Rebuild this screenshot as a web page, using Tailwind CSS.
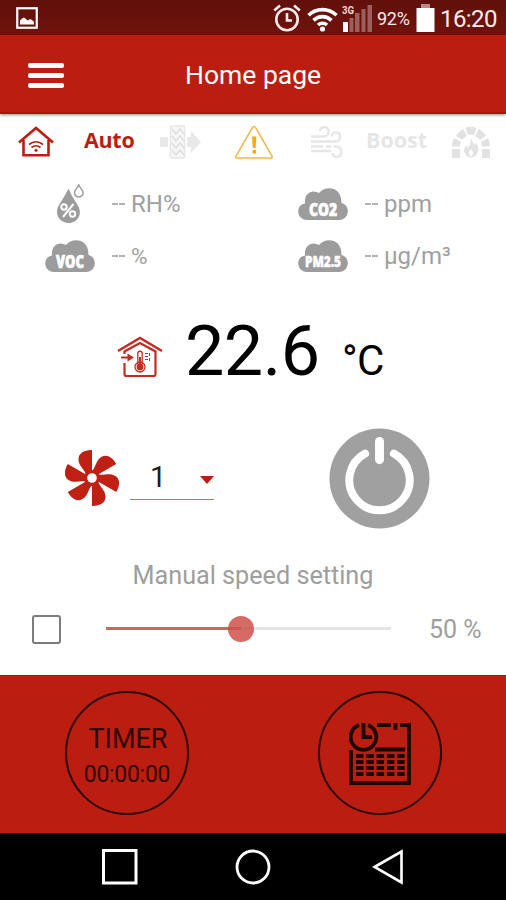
<!DOCTYPE html>
<html lang="en">

<head>
 <meta charset="UTF-8">
 <meta name="viewport" content="width=device-width, initial-scale=1.0">
 <title>Home page</title>
 <script src="https://cdn.jsdelivr.net/npm/@tailwindcss/browser@4"></script>
</head>

<body class="w-[506px] h-[900px] overflow-hidden flex flex-col bg-white font-['Roboto',sans-serif] leading-none whitespace-nowrap">
<!-- Status bar -->
<div class="h-[35px] shrink-0 bg-linear-to-b from-[#61100b] to-[#70130c] flex items-center text-[#fbeceb]">
 <svg class="w-[22px] h-[22px] ml-4" viewBox="0 0 22 22">
  <rect x="1.25" y="1.25" width="19.5" height="19.5" fill="none" stroke="#fff" stroke-width="2.2"/>
  <path d="M4 17.500V13.500L6 11.500 8 10.500 10.500 12.500 12 13.500 14 12 16 13 18 15V17.500Z" fill="#fff"/>
 </svg>
 <!-- Alarm -->
 <svg class="w-7 h-7 ml-[235px]" viewBox="0 0 28 28" fill="none" stroke="#fbeceb" stroke-width="2.600">
  <circle cx="14" cy="15.500" r="10.700"/>
  <path d="M14 9v7.500h5M1.200 6.500L7 1.500M26.800 6.500L21 1.500"/>
 </svg>
 <!-- Wifi -->
 <svg class="w-[31px] h-7 ml-[6px] mt-[2px]" viewBox="0 0 31 28" fill="none" stroke="#fff" stroke-width="3.600">
  <path d="M1.500 10.200C9.500 2.800 21.500 2.800 29.500 10.200M6.500 15.400C12 10.300 19 10.300 24.500 15.400M11 20C13.500 17.700 17.500 17.700 20 20"/>
  <circle cx="15.500" cy="24" r="2.600" fill="#fff" stroke="none"/>
 </svg>
 <!-- Signal -->
 <svg class="w-[31px] h-7 ml-1" viewBox="0 0 31 28">
  <path d="M1 18h5v10H1z" fill="#fff"/>
  <path d="M7.500 14h4v14h-4zM13 9h4.500v19H13zM19.500 5h4v23h-4zM25.500 1h4.500v27h-4.500z" fill="#9d5f5b"/>
  <text x="0" y="10" font-size="10.500" font-weight="700" fill="#f3d9d7" textLength="12" lengthAdjust="spacingAndGlyphs">3G</text>
 </svg>
 <span class="ml-1 mt-[3px] w-[34px] text-[18px] tracking-[-0.3px]">92%</span>
 <svg class="w-[19px] h-7 ml-[5px]" viewBox="0 0 19 28">
  <path d="M5 0h9v4H5z" fill="#b98a87"/>
  <path d="M0.500 4h18v24h-18z" fill="#fff"/>
 </svg>
 <span class="ml-[5px] mt-[3px] text-[24px] tracking-[-0.6px]">16:20</span>
</div>

<!-- Title bar -->
<header class="relative z-10 h-[79px] shrink-0 bg-[#bb1e11] flex items-center border-b-2 border-[#ae1409] shadow-[0_1px_3px_rgba(0,0,0,0.45)]">
 <button class="ml-[28px] mt-[3px] w-9 flex flex-col gap-[5px]">
  <span class="h-[5px] rounded-[2px] bg-white"></span>
  <span class="h-[5px] rounded-[2px] bg-white"></span>
  <span class="h-[5px] rounded-[2px] bg-white"></span>
 </button>
 <h1 class="ml-[121px] pt-[4px] text-[26.500px] text-white">Home page</h1>
</header>

<main class="h-[561px] shrink-0 flex flex-col">
 <!-- Mode icons -->
 <div class="h-14 flex items-center font-['Open_Sans',sans-serif] font-bold text-[21.500px]">
  <svg class="w-9 h-8 ml-[18px]" viewBox="0 0 36 32" fill="none" stroke="#bb1e11">
   <path d="M1 16.500L18 2l17 14.500M5.500 14v15.300h25V14" stroke-width="2.600"/>
   <path d="M11 18.500q7-5.500 14 0M13.500 21.500q4.500-3.500 9 0" stroke-width="1.700"/>
   <circle cx="18" cy="24.300" r="1.500" fill="#bb1e11" stroke="none"/>
  </svg>
  <span class="ml-[30px] w-[50px] pb-[5px] tracking-[-0.3px] text-[#bb1e11]">Auto</span>
  <svg class="w-[41px] h-[34px] ml-[26px]" viewBox="0 0 41 34">
   <path d="M0 12h8v10H0zM27 12h4V6l10 11-10 11v-6h-4z" fill="#e8e8e8"/>
   <rect x="10.500" y="1" width="14" height="32" rx="1" fill="#f7f7f7" stroke="#e6e6e6" stroke-width="1.500"/>
   <path d="M12 4l4 5 4-5 4 5M12 11l4 5 4-5 4 5M12 18l4 5 4-5 4 5M12 25l4 5 4-5 4 5" fill="none" stroke="#dedede" stroke-width="1.500"/>
  </svg>
  <svg class="w-10 h-9 ml-[33px]" viewBox="0 0 40 36">
   <path d="M20 2.500q1 0 1.600 1.200L38 32q.8 2-1.300 2H3.300Q1.200 34 2 32L18.400 3.700Q19 2.500 20 2.500Z" fill="none" stroke="#f4b643" stroke-width="1.500"/>
   <path d="M18 12.500h4.400l-.8 11.500h-2.800zM18.500 26h3.500v3.500h-3.500z" fill="#f5aa1c"/>
  </svg>
  <svg class="w-[33px] h-[34px] ml-9" viewBox="0 0 33 34" fill="none" stroke="#e6e6e6" stroke-width="2.400">
   <path d="M1 11.500h13c6 0 6-9.500.5-9.500-3 0-4.500 2-4.500 4M1 16.500h24c7 0 7-9 1-9-3 0-4.500 2-4.500 4M1 21.500h12M16 21.500h5M1 26h20M24 21.500h2c7 0 7 10.500 1 10.500-3 0-4.500-1.500-4.500-4"/>
  </svg>
  <span class="ml-[23px] w-[62px] pb-[5px] text-[#e6e6e6]">Boost</span>
  <svg class="w-[38px] h-8 ml-[24px]" viewBox="0 0 38 32" fill="#e2e2e2">
   <path d="M0 23h8v9H0zM30 23h8v9h-8zM0 20.500Q0 16 2 12l7 4q-1 2-1 4.500zM38 20.500Q38 16 36 12l-7 4q1 2 1 4.500zM4 9.500Q7 5.500 11 3l4 7q-3 1.500-5 4zM34 9.500Q31 5.500 27 3l-4 7q3 1.500 5 4zM13.500 2Q19-.5 24.500 2L22 9q-3-1-6 0z"/>
   <path d="M19 12q1 4 4 7 1-1 1-3 3 5 2 9-1 5-7 7-6-2-7-7 0-4 3-6 0 2 1 3 3-4 3-10z"/>
   <path d="M19 23q4 4 0 8-4-4 0-8z" fill="#fff"/>
  </svg>
 </div>

 <!-- Air quality -->
 <div class="mt-2 grid grid-cols-2 grid-rows-[52px_52px] text-[24px] text-[#a0a0a0]">
  <div class="flex items-center">
   <svg class="w-7 h-10 ml-14" viewBox="0 0 28 40" fill="#9c9c9c">
    <path d="M12.500 4.500Q15 11 21 20c7 10 0 19-8.500 19S-3 30 3.500 20Q9.500 11 12.500 4.500Z"/>
    <path d="M22.800.8Q24 3.500 26 6c3 4-.5 7-3.200 7s-6-3-3.200-7q2-2.500 3.200-5.200Z" fill="none" stroke="#9c9c9c" stroke-width="1.400"/>
    <g fill="none" stroke="#fff" stroke-width="2"><circle cx="8" cy="23" r="2.700"/><circle cx="16.500" cy="30" r="2.700"/><path d="M17.500 20L7 33"/></g>
   </svg>
   <span class="ml-7 flex items-center"><span class="mr-[5px] w-[14px] flex gap-px"><i class="w-[6px] h-[2px] bg-[#b2b2b2]"></i><i class="w-[6px] h-[2px] bg-[#b2b2b2]"></i></span>RH%</span>
  </div>
  <div class="flex items-center">
   <svg class="w-[50px] h-8 ml-[45px]" viewBox="0 0 50 32">
    <path d="M9 32C-1.500 32-3 17 7 15.500 6 5 14 1 21 5 27-3 44-2 43.500 15 53 17 51.500 32 41 32Z" fill="#9c9c9c"/>
    <text x="11" y="27.500" font-family="Open Sans" font-size="17" font-weight="800" fill="#fff" stroke="#fff" stroke-width=".7" textLength="28" lengthAdjust="spacingAndGlyphs">CO2</text>
   </svg>
   <span class="ml-[17px] flex items-center"><span class="mr-[5px] w-[14px] flex gap-px"><i class="w-[6px] h-[2px] bg-[#b2b2b2]"></i><i class="w-[6px] h-[2px] bg-[#b2b2b2]"></i></span>ppm</span>
  </div>
  <div class="flex items-center">
   <svg class="w-[50px] h-8 ml-[45px]" viewBox="0 0 50 32">
    <path d="M9 32C-1.500 32-3 17 7 15.500 6 5 14 1 21 5 27-3 44-2 43.500 15 53 17 51.500 32 41 32Z" fill="#9c9c9c"/>
    <text x="11" y="27.500" font-family="Open Sans" font-size="17" font-weight="800" fill="#fff" stroke="#fff" stroke-width=".7" textLength="28" lengthAdjust="spacingAndGlyphs">VOC</text>
   </svg>
   <span class="ml-[17px] flex items-center"><span class="mr-[5px] w-[14px] flex gap-px"><i class="w-[6px] h-[2px] bg-[#b2b2b2]"></i><i class="w-[6px] h-[2px] bg-[#b2b2b2]"></i></span><span class="text-[22.500px]">%</span></span>
  </div>
  <div class="flex items-center">
   <svg class="w-[50px] h-8 ml-[45px] overflow-visible" viewBox="0 0 50 32">
    <path d="M9 32C-1.500 32-3 17 7 15.500 6 5 14 1 21 5 27-3 44-2 43.500 15 53 17 51.500 32 41 32Z" fill="#9c9c9c"/>
    <text x="7" y="27" font-family="Open Sans" font-size="16" font-weight="800" fill="#fff" stroke="#fff" stroke-width=".5" textLength="36" lengthAdjust="spacingAndGlyphs">PM2.5</text>
   </svg>
   <span class="ml-[17px] flex items-center"><span class="mr-[5px] w-[14px] flex gap-px"><i class="w-[6px] h-[2px] bg-[#b2b2b2]"></i><i class="w-[6px] h-[2px] bg-[#b2b2b2]"></i></span>µg/m³</span>
  </div>
 </div>

 <!-- Indoor temperature -->
 <div class="mt-8 h-[72px] flex items-end text-black">
  <svg class="w-[46px] h-[42px] ml-[117px] mb-[8px]" viewBox="0 0 46 42" fill="none" stroke="#c32a20">
   <path d="M1 15L23 2l22 13" stroke-width="2.400"/>
   <path d="M7.500 18v-2.500L23 7l15.500 8.500V38q0 2-2 2h-27q-2 0-2-2v-11" stroke-width="2.200"/>
   <path d="M4 21.500h8" stroke-width="2"/>
   <path d="M10.500 17.500l6.500 4-6.500 4z" fill="#c32a20" stroke="none"/>
   <path d="M20.800 28V16.500q2.200-2.500 4.400 0V28" stroke-width="1.300"/>
   <circle cx="23" cy="31" r="5" stroke-width="1.300"/>
   <circle cx="23" cy="31" r="3.400" fill="#c32a20" stroke="none"/>
   <path d="M23 21v8" stroke-width="2"/>
   <path d="M28 17.500h3M28 20.500h3M28 23.500h3M32.500 17v3M32.500 22v3" stroke-width="1"/>
  </svg>
  <span class="ml-[22px] w-[136px] text-[70px] tracking-[-0.5px]">22.6</span>
  <span class="ml-[21px] mb-[4px] text-[42px] tracking-[-0.8px]">°C</span>
 </div>

 <!-- Fan level and power -->
 <div class="mt-10 h-[104px] flex items-center">
  <svg class="w-[54px] h-[56px] ml-[65px]" viewBox="-27 -28 54 56" fill="#c01f14">
   <defs>
    <path id="blade" d="M0-28V-4L-5.500-2C-6.500-6.500-10-9.500-12.500-14-16-23-10-28 0-28Z"/>
   </defs>
   <use href="#blade"/>
   <use href="#blade" transform="rotate(60)"/>
   <use href="#blade" transform="rotate(120)"/>
   <use href="#blade" transform="rotate(180)"/>
   <use href="#blade" transform="rotate(240)"/>
   <use href="#blade" transform="rotate(300)"/>
   <circle r="8"/>
   <circle r="4.800" fill="#fff"/>
  </svg>
  <div class="ml-[11px] mt-1 w-[84px] h-[40px] border-b border-[#cf6a63] flex items-center">
   <span class="ml-5 w-[17px] pb-[4px] text-[29px] text-[#1d1d1d]">1</span>
   <svg class="w-[14px] h-2 ml-[33px]" viewBox="0 0 14 8"><path d="M0 0h14L7 8z" fill="#bb1e11"/></svg>
  </div>
  <svg class="w-[101px] h-[101px] ml-[115px]" viewBox="0 0 102 102">
   <circle cx="51" cy="51" r="50.500" fill="#a0a0a0"/>
   <path d="M36.500 25.800A30.500 30.500 0 1 0 65.500 25.800" fill="none" stroke="#fff" stroke-width="8" stroke-linecap="round"/>
   <path d="M51 13.500v18.500" stroke="#fff" stroke-width="9" stroke-linecap="round"/>
  </svg>
 </div>

 <!-- Manual speed -->
 <div class="mt-[33px] text-center text-[25.200px] text-[#9e9e9e]">Manual speed setting</div>
 <div class="mt-[16px] h-[50px] flex items-center">
  <span class="ml-8 w-[29px] h-[29px] rounded-[3px] border-2 border-[#7b7b7b]"></span>
  <div class="relative ml-[45px] mb-[2px] w-[285px] h-[3px] bg-[#e4e4e4]">
   <div class="h-full bg-[#cc675f]" style="width: 47.500%"></div>
   <span class="absolute left-[122px] -top-[11px] w-[26px] h-[26px] rounded-full bg-[#cf5049]/85"></span>
  </div>
  <span class="ml-[38px] text-[25px] text-[#9e9e9e]">50 %</span>
 </div>
</main>

<!-- Timer and schedule -->
<footer class="h-[158px] shrink-0 bg-[#bb1e11] border-t border-[#a8140a] pb-[3px] flex items-center">
 <button class="ml-[65px] w-[124px] h-[124px] rounded-full border-2 border-[#2a0300] flex flex-col items-center justify-center gap-[10px] text-[#300500]">
  <span class="mt-[5px] ml-[2px] text-[27px]">TIMER</span>
  <span class="text-[23px] tracking-[-0.3px]">00:00:00</span>
 </button>
 <button class="ml-[129px] w-[124px] h-[124px] rounded-full border-2 border-[#2a0300] flex items-center justify-center">
  <svg class="w-[62px] h-[63px]" viewBox="0 0 62 63" fill="none" stroke="#1f0300" stroke-width="3.800">
   <path d="M10 3A12.800 12.800 0 1 0 19 3M14.500 1v14H23"/>
   <path d="M28 3h14M46.500 1v7M51 3h9v58H2V28M26 27.500h30"/>
   <path d="M7 34h49M7 40h49M7 46h49M7 52h49" stroke-dasharray="7.500 2.800"/>
  </svg>
 </button>
</footer>

<!-- Android buttons -->
<nav class="h-[67px] shrink-0 bg-black flex items-center">
 <svg class="w-9 h-9 ml-[102px]" viewBox="0 0 36 36"><rect x="1.500" y="1.500" width="32.500" height="32.500" fill="none" stroke="#fff" stroke-width="3"/></svg>
 <svg class="w-9 h-9 ml-[97px]" viewBox="0 0 36 36"><circle cx="18" cy="18" r="16" fill="none" stroke="#fff" stroke-width="2.800"/></svg>
 <svg class="w-8 h-9 ml-[101px]" viewBox="0 0 32 36"><path d="M2.500 18L29.500 2.500v31z" fill="none" stroke="#fff" stroke-width="2.600"/></svg>
</nav>
</body>

</html>
